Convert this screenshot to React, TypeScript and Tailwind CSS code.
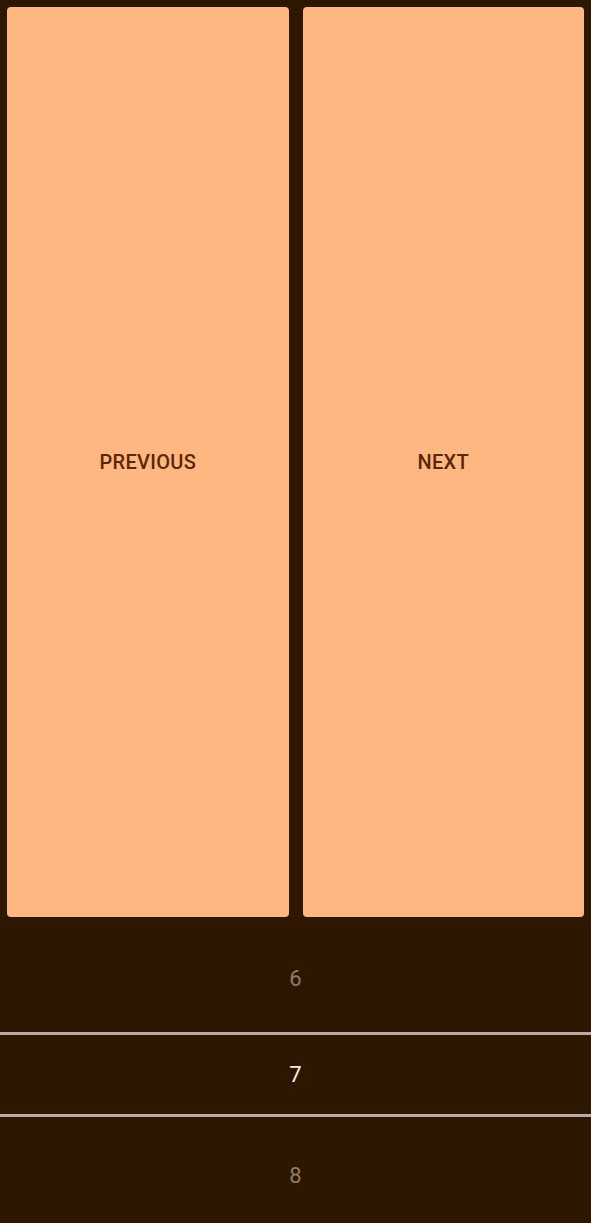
import React from "react";

const font = { fontFamily: "Roboto, 'Noto Sans', sans-serif" };

function PagerButton({ label }: { label: string }) {
  return (
    <button className="flex-1 flex items-center justify-center rounded-[4px] bg-[#ffb781] text-[20px] font-medium text-[#5c2608] tracking-[0.3px]">
      {label}
    </button>
  );
}

export default function App() {
  const values = [6, 7, 8];

  return (
    <div className="h-[1223px] w-full overflow-hidden bg-[#2d1700] flex flex-col" style={font}>
      {/* Navigation buttons */}
      <div className="flex shrink-0 gap-[14px] p-[7px] h-[924px]">
        <PagerButton label="PREVIOUS" />
        <PagerButton label="NEXT" />
      </div>

      {/* Number picker */}
      <div className="flex flex-col shrink-0">
        <div className="h-[108px] flex items-center justify-center text-[22px] text-[#8f7a69]">
          {values[0]}
        </div>
        <div className="h-[3px] bg-[#bcaaa8]" />
        <div className="h-[79px] flex items-center justify-center text-[22px] text-[#f7ede6]">
          {values[1]}
        </div>
        <div className="h-[3px] bg-[#bcaaa8]" />
        <div className="h-[116px] flex items-center justify-center text-[22px] text-[#8f7a69]">
          {values[2]}
        </div>
      </div>
    </div>
  );
}
